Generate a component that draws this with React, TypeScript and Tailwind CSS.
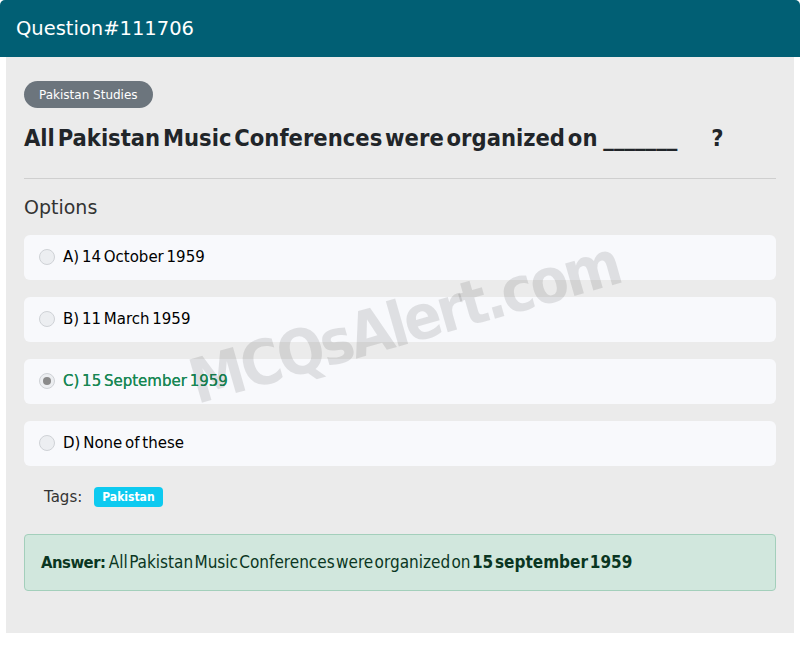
const options = [
  { key: 'A', text: '14 October 1959', correct: false },
  { key: 'B', text: '11 March 1959', correct: false },
  { key: 'C', text: '15 September 1959', correct: true },
  { key: 'D', text: 'None of these', correct: false },
];

const App = () => {
  return (
    <div className="w-[800px] font-['DejaVu_Sans',sans-serif]">
      <div className="flex h-[57px] items-center rounded-t-[5px] bg-[#015f74] px-4">
        <h1 className="text-[19.5px] text-white">Question#111706</h1>
      </div>

      <div className="relative mx-[6px] overflow-hidden bg-[#ebebeb] px-[18px] pt-6 pb-[42px]">
        <span className="inline-flex h-[27px] items-center rounded-full bg-[#6c757d] px-[15px] text-[12px] text-white">
          Pakistan Studies
        </span>

        <h2 className="mt-[13px] text-[23.5px] font-bold text-[#212529] font-stretch-condensed [word-spacing:-4.5px]">
          All Pakistan Music Conferences were organized on <span className="ml-[3px]">_______</span>
          <span className="ml-[34px]">?</span>
        </h2>

        <hr className="mt-[22px] border-t border-[#cfcfcf]" />

        <div className="mt-[14px] text-[19px] text-[#333]">Options</div>

        <div className="mt-[13px] flex flex-col gap-[17px]">
          {options.map((o) => (
            <div
              key={o.key}
              className="flex h-[45px] items-center rounded-[6px] bg-[#f8f9fc] px-[15px]"
            >
              <span className="flex h-[16px] w-[16px] items-center justify-center rounded-full border border-[#cfd2d6] bg-[#eceef1]">
                {o.correct && <span className="h-[8px] w-[8px] rounded-full bg-[#8a8a8a]" />}
              </span>
              <span
                className={`ml-[8px] text-[15px] [word-spacing:-2px] ${
                  o.correct ? 'text-[#198754] [text-shadow:0_0_0.4px_#198754]' : 'text-black'
                }`}
              >
                {o.key}) {o.text}
              </span>
            </div>
          ))}
        </div>

        <div className="mt-[20px] flex items-center pl-5">
          <span className="text-[15px] text-[#333]">Tags:</span>
          <span className="ml-[12px] rounded-[4px] bg-[#0dcaf0] px-[8px] py-[1px] text-[12px] font-bold text-white font-stretch-condensed">
            Pakistan
          </span>
        </div>

        <div className="mt-[26px] flex h-[57px] items-center rounded-[4px] border border-[#a3cfbb] bg-[#d1e7dd] px-4 text-[17px] text-[#0a3622] font-stretch-condensed [word-spacing:-3.5px]">
          <span>
            <b className="text-[16.5px] tracking-[-0.5px]">Answer:</b>{' '}
            <span className="ml-[2px]">All Pakistan Music Conferences were organized on</span>{' '}
            <b>15 september 1959</b>
          </span>
        </div>

        <div className="pointer-events-none absolute left-[173px] top-[219px] w-[450px] -rotate-[16deg] whitespace-nowrap text-center text-[62px] font-bold leading-[93px] tracking-[-3px] text-black/[0.1] font-stretch-condensed">
          MCQsAlert.com
        </div>
      </div>
    </div>
  );
};

export default App;
